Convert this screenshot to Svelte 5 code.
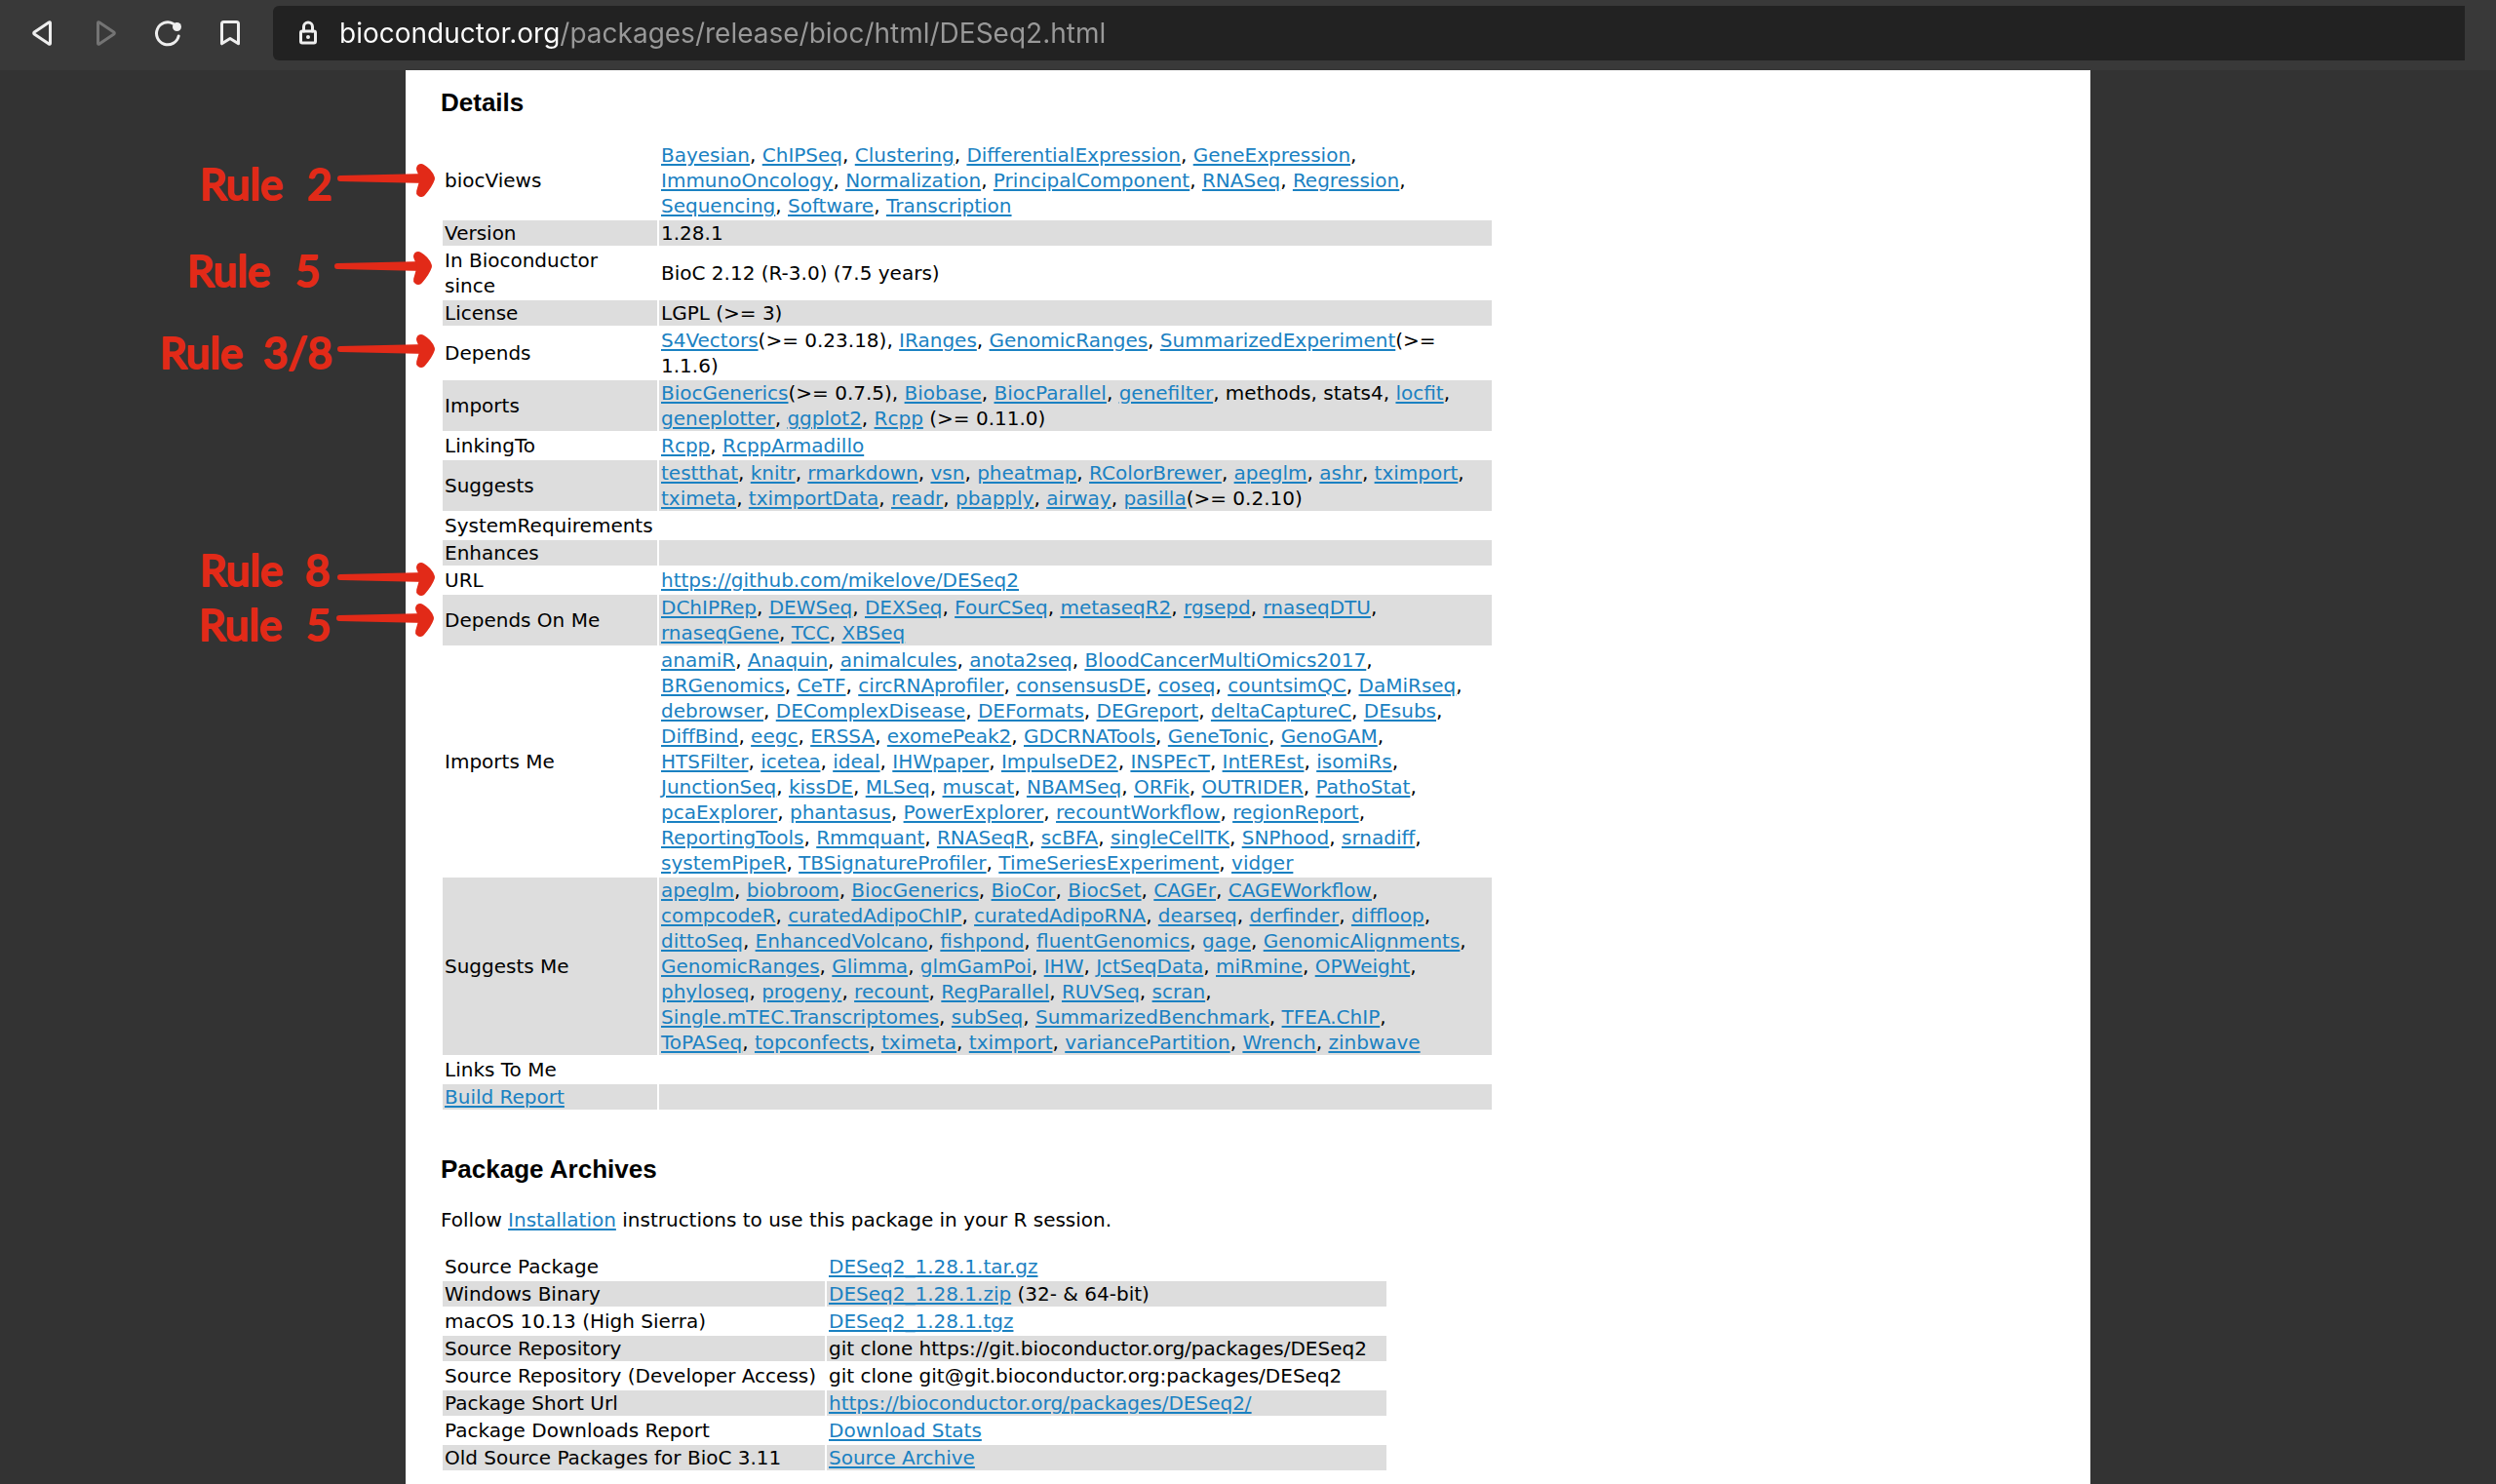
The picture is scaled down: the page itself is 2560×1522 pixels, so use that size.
<script>
  // Each row is a label followed by its lines; [name] marks a link.
  const details = [
    ['biocViews', [
      '[Bayesian], [ChIPSeq], [Clustering], [DifferentialExpression], [GeneExpression],',
      '[ImmunoOncology], [Normalization], [PrincipalComponent], [RNASeq], [Regression],',
      '[Sequencing], [Software], [Transcription]']],
    ['Version', ['1.28.1']],
    ['In Bioconductor\nsince', ['BioC 2.12 (R-3.0) (7.5 years)']],
    ['License', ['LGPL (>= 3)']],
    ['Depends', [
      '[S4Vectors](>= 0.23.18), [IRanges], [GenomicRanges], [SummarizedExperiment](>=',
      '1.1.6)']],
    ['Imports', [
      '[BiocGenerics](>= 0.7.5), [Biobase], [BiocParallel], [genefilter], methods, stats4, [locfit],',
      '[geneplotter], [ggplot2], [Rcpp] (>= 0.11.0)']],
    ['LinkingTo', ['[Rcpp], [RcppArmadillo]']],
    ['Suggests', [
      '[testthat], [knitr], [rmarkdown], [vsn], [pheatmap], [RColorBrewer], [apeglm], [ashr], [tximport],',
      '[tximeta], [tximportData], [readr], [pbapply], [airway], [pasilla](>= 0.2.10)']],
    ['SystemRequirements', []],
    ['Enhances', []],
    ['URL', ['[https://github.com/mikelove/DESeq2]']],
    ['Depends On Me', [
      '[DChIPRep], [DEWSeq], [DEXSeq], [FourCSeq], [metaseqR2], [rgsepd], [rnaseqDTU],',
      '[rnaseqGene], [TCC], [XBSeq]']],
    ['Imports Me', [
      '[anamiR], [Anaquin], [animalcules], [anota2seq], [BloodCancerMultiOmics2017],',
      '[BRGenomics], [CeTF], [circRNAprofiler], [consensusDE], [coseq], [countsimQC], [DaMiRseq],',
      '[debrowser], [DEComplexDisease], [DEFormats], [DEGreport], [deltaCaptureC], [DEsubs],',
      '[DiffBind], [eegc], [ERSSA], [exomePeak2], [GDCRNATools], [GeneTonic], [GenoGAM],',
      '[HTSFilter], [icetea], [ideal], [IHWpaper], [ImpulseDE2], [INSPEcT], [IntEREst], [isomiRs],',
      '[JunctionSeq], [kissDE], [MLSeq], [muscat], [NBAMSeq], [ORFik], [OUTRIDER], [PathoStat],',
      '[pcaExplorer], [phantasus], [PowerExplorer], [recountWorkflow], [regionReport],',
      '[ReportingTools], [Rmmquant], [RNASeqR], [scBFA], [singleCellTK], [SNPhood], [srnadiff],',
      '[systemPipeR], [TBSignatureProfiler], [TimeSeriesExperiment], [vidger]']],
    ['Suggests Me', [
      '[apeglm], [biobroom], [BiocGenerics], [BioCor], [BiocSet], [CAGEr], [CAGEWorkflow],',
      '[compcodeR], [curatedAdipoChIP], [curatedAdipoRNA], [dearseq], [derfinder], [diffloop],',
      '[dittoSeq], [EnhancedVolcano], [fishpond], [fluentGenomics], [gage], [GenomicAlignments],',
      '[GenomicRanges], [Glimma], [glmGamPoi], [IHW], [JctSeqData], [miRmine], [OPWeight],',
      '[phyloseq], [progeny], [recount], [RegParallel], [RUVSeq], [scran],',
      '[Single.mTEC.Transcriptomes], [subSeq], [SummarizedBenchmark], [TFEA.ChIP],',
      '[ToPASeq], [topconfects], [tximeta], [tximport], [variancePartition], [Wrench], [zinbwave]']],
    ['Links To Me', []],
    ['[Build Report]', []]
  ];

  const archives = [
    ['Source Package', ['[DESeq2_1.28.1.tar.gz]']],
    ['Windows Binary', ['[DESeq2_1.28.1.zip] (32- & 64-bit)']],
    ['macOS 10.13 (High Sierra)', ['[DESeq2_1.28.1.tgz]']],
    ['Source Repository', ['git clone https://git.bioconductor.org/packages/DESeq2']],
    ['Source Repository (Developer Access)', ['git clone git@git.bioconductor.org:packages/DESeq2']],
    ['Package Short Url', ['[https://bioconductor.org/packages/DESeq2/]']],
    ['Package Downloads Report', ['[Download Stats]']],
    ['Old Source Packages for BioC 3.11', ['[Source Archive]']]
  ];

  // Positions are relative to the notes layer, whose arrows point at table rows.
  const notes = [
    { x: 55, y: 65, number: '2', nx: 165, ax: 196, ay: 43 },
    { x: 42, y: 154, number: '5', nx: 153, ax: 193, ay: 133 },
    { x: 14, y: 238, number: '3/8', nx: 120, ax: 196, ay: 218 },
    { x: 55, y: 461, number: '8', nx: 163, ax: 196, ay: 452 },
    { x: 54, y: 517, number: '5', nx: 164, ax: 195, ay: 494 }
  ];

  let address = $state('bioconductor.org/packages/release/bioc/html/DESeq2.html');

  const parts = (line) =>
    line.split(/(\[[^\]]+\])/).filter(Boolean).map((t) =>
      t.startsWith('[') ? { link: true, text: t.slice(1, -1) } : { link: false, text: t });
</script>

{#snippet rich(line)}{#each parts(line) as p}{#if p.link}<a href="#top">{p.text}</a>{:else}{p.text}{/if}{/each}{/snippet}

{#snippet grid(rows, kind, caption)}
  <table class={kind} aria-label={caption}>
    <tbody>
      {#each rows as [label, lines]}
        <tr>
          <th scope="row">{@render rich(label)}</th>
          <td>{#each lines as line}<div class="line">{@render rich(line)}</div>{/each}</td>
        </tr>
      {/each}
    </tbody>
  </table>
{/snippet}

<div class="browser" id="top">
  <header>
    <nav aria-label="Browser">
      <button aria-label="Back">
        <svg viewBox="0 0 28 28"><path d="M21.5 3.5v21c0 .9-.8 1-1.4.5L5.2 15c-.7-.5-.7-1.5 0-2L20.1 3c.6-.5 1.4-.4 1.4.5z" /></svg>
      </button>
      <button aria-label="Forward" disabled>
        <svg viewBox="0 0 28 28"><path d="M6.5 3.5v21c0 .9.8 1 1.4.5L22.8 15c.7-.5.7-1.5 0-2L7.9 3c-.6-.5-1.4-.4-1.4.5z" /></svg>
      </button>
      <button aria-label="Reload">
        <svg viewBox="0 0 28 28"><path d="M19.5 4.2A11.5 11.5 0 1 0 25.2 17" /><circle class="solid" cx="23.5" cy="7.5" r="4.5" /></svg>
      </button>
      <button aria-label="Bookmark">
        <svg viewBox="0 0 28 28"><path d="M5.5 24.8V4.5q0-2 2-2h13q2 0 2 2v20.3L14 19.5z" /></svg>
      </button>
    </nav>
    <label class="address">
      <svg viewBox="0 0 28 28" aria-hidden="true">
        <rect x="6.5" y="12" width="15" height="12" rx="1.5" /><path d="M9.5 12V7.5a4.5 4.5 0 0 1 9 0V12" /><circle class="solid" cx="14" cy="18" r="2" />
      </svg>
      <input type="text" aria-label="Address" bind:value={address} />
    </label>
  </header>

  <main>
    <article>
      <h2>Details</h2>
      {@render grid(details, 'details', 'Details')}
      <h2>Package Archives</h2>
      <p>Follow <a href="#top">Installation</a> instructions to use this package in your R session.</p>
      {@render grid(archives, 'archives', 'Package Archives')}

      <svg class="notes" viewBox="0 0 320 540">
        {#each notes as n}
          <text x={n.x} y={n.y}>Rule</text>
          <text x={n.nx} y={n.y}>{n.number}</text>
          <g transform="translate({n.ax} {n.ay})">
            <path class="shaft" d="M3-3Q0-3 0 0T3 3L92 5V-5z" />
            <path class="head" d="M86-10Q93-6 95 0Q93 6 86 14L90 0z" />
          </g>
        {/each}
      </svg>
    </article>
  </main>
</div>

<style>
  :global(body) {
    background: #333;
  }
  .browser {
    min-height: 100vh;
    display: flex;
    flex-direction: column;
    overflow: hidden;
  }
  header {
    display: flex;
    align-items: center;
    gap: 18px;
    padding: 6px 32px 10px 18px;
    background: #393939;
  }
  nav {
    display: flex;
    gap: 24px;
    padding: 0 6px;
  }
  button {
    display: flex;
    padding: 0 6px;
    border: 0;
    background: none;
    color: #eee;
  }
  button:disabled {
    color: #747474;
  }
  button svg,
  .address svg {
    width: 28px;
    height: 28px;
    flex: none;
    fill: none;
    stroke: currentColor;
    stroke-width: 3;
    stroke-linejoin: round;
    stroke-linecap: round;
  }
  button svg .solid,
  .address svg .solid {
    fill: currentColor;
    stroke: none;
  }
  .address {
    flex: 1;
    display: flex;
    align-items: center;
    gap: 18px;
    height: 56px;
    padding: 0 22px;
    border-radius: 6px 0 0 6px;
    background: #222;
    color: #eee;
  }
  input {
    flex: 1;
    min-width: 0;
    padding: 0;
    border: 0;
    outline: 0;
    font: 28px/40px Inter, sans-serif;
    background: linear-gradient(90deg, #fff 226px, #999 226px);
    background-clip: text;
    color: transparent;
  }
  main {
    flex: 1;
    display: flex;
    justify-content: center;
  }
  article {
    position: relative;
    box-sizing: border-box;
    width: 67.5%;
    padding: 18px 36px 10px;
    background: #fff;
    color: #000;
    font: 20px/26px "DejaVu Sans", Verdana, sans-serif;
  }
  h2 {
    margin: 0 0 24px;
    font: bold 26px/30px "Liberation Sans", Arial, sans-serif;
  }
  p {
    margin: 0 0 20px;
  }
  a {
    color: #1a81c2;
    text-decoration: underline;
    text-decoration-thickness: 2px;
    text-underline-offset: 2px;
  }
  table {
    border-spacing: 2px;
  }
  .details {
    width: 1080px;
    margin-bottom: 44px;
  }
  .details th {
    width: 216px;
  }
  .archives th {
    width: 388px;
  }
  .archives td {
    width: 570px;
  }
  th,
  td {
    height: 26px;
    padding: 0 2px;
    text-align: left;
    font-weight: normal;
  }
  th {
    white-space: pre-line;
  }
  tr:nth-child(even) > * {
    background: #ddd;
  }
  .line {
    white-space: nowrap;
  }
  .notes {
    position: absolute;
    top: 68px;
    left: -266px;
    width: 320px;
    height: 540px;
    pointer-events: none;
  }
  .notes text {
    font: 500 44px Lato, sans-serif;
    fill: #e22a18;
    stroke: #e22a18;
    stroke-width: 2;
    stroke-linejoin: round;
  }
  .shaft {
    fill: #e22a18;
  }
  .head {
    fill: #e22a18;
    stroke: #e22a18;
    stroke-width: 10;
    stroke-linecap: round;
    stroke-linejoin: round;
  }
</style>
